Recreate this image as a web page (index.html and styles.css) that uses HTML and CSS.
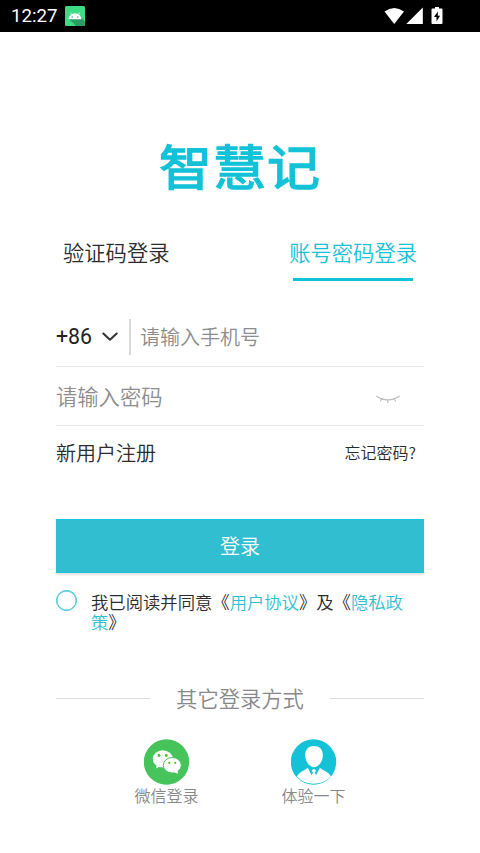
FILE: index.html
```html
<!DOCTYPE html>
<html lang="zh-CN">
<head>
<meta charset="utf-8">
<title>智慧记</title>
<link rel="stylesheet" href="styles.css">
</head>
<body>
<header class="status">
  <span class="clock">12:27</span>
  <svg class="droid" width="20" height="20" viewBox="0 0 20 20">
    <rect width="20" height="20" rx="1.5" fill="#3ddc84"/>
    <path d="M4 13 L11 20 H20 V16 L14.5 9z" fill="#2a9e62"/>
    <path d="M3.5 13.3a6.5 6 0 0 1 13 0z" fill="#fff"/>
    <path d="M6.8 9 5.4 6.7M13.2 9l1.4-2.3" stroke="#fff" stroke-width=".8"/>
    <circle cx="7.2" cy="11" r=".65" fill="#2c9c60"/><circle cx="12.8" cy="11" r=".65" fill="#2c9c60"/>
  </svg>
  <svg class="signals" width="60" height="20" viewBox="0 0 60 20" fill="#fff">
    <path d="M.5 5.6Q10.2-1.8 20 5.6L10.2 18z"/>
    <path d="M38.800 1.500V18H22.300z"/>
    <path d="M51 1h4v1.500h2.500q1 0 1 1V17q0 1-1 1h-9q-1 0-1-1V3.500q0-1 1-1H51z"/>
    <path d="M53.800 5.500 50 11h2.500v4.500l3.600-5.700h-2.300z" fill="#000"/>
  </svg>
</header>
<main class="login">
  <h1 class="logo">智慧记</h1>
  <nav class="tabs">
    <span class="tab">验证码登录</span>
    <span class="tab active">账号密码登录</span>
  </nav>
  <div class="field phone">
    <span class="code">+86</span>
    <svg class="chevron" width="16" height="10" viewBox="0 0 16 10" fill="none" stroke="#333" stroke-width="2" stroke-linecap="round" stroke-linejoin="round"><path d="M1.300 1.500 8 7.700l6.700-6.200"/></svg>
    <span class="bar"></span>
    <span class="hint">请输入手机号</span>
  </div>
  <div class="field password">
    <span class="hint">请输入密码</span>
    <svg class="eye" width="24" height="9" viewBox="0 0 24 9" fill="none" stroke="#bbb" stroke-width="1.100"><path d="M.3 1q5.500 3.900 11.500 3.900T23.700 1M5.600 3.700 4.400 6.400M11.800 5v3M18.300 3.700l1.400 2.700"/></svg>
  </div>
  <div class="links"><span class="register">新用户注册</span><span class="forgot">忘记密码?</span></div>
  <div class="submit">登录</div>
  <div class="agree">
    <span class="radio"></span>
    <p class="terms">我已阅读并同意《<span class="link">用户协议</span>》及《<span class="link">隐私政策</span>》</p>
  </div>
  <div class="other"><span class="rule"></span><span class="other-title">其它登录方式</span><span class="rule"></span></div>
  <div class="methods">
    <div class="method">
      <svg width="46" height="46" viewBox="0 0 46 46">
        <circle cx="22.500" cy="23" r="22.700" fill="#46c35b"/>
        <path d="M12.800 25.500 12 29.500l4.300-2.200z" fill="#fff"/>
        <ellipse cx="18.800" cy="19.800" rx="10" ry="8.600" fill="#fff"/>
        <ellipse cx="28.300" cy="26.300" rx="9" ry="7.800" fill="#fff" stroke="#46c35b" stroke-width="1"/>
        <path d="M30 33.300 34 34.800l-.5-3.500z" fill="#fff"/>
        <g fill="#46c31b"><circle cx="15" cy="16.500" r="1.400"/><circle cx="22.300" cy="16.500" r="1.400"/><circle cx="25.300" cy="23.800" r="1.100"/><circle cx="31.300" cy="23.800" r="1.100"/></g>
      </svg>
      <span>微信登录</span>
    </div>
    <div class="method">
      <svg width="46" height="46" viewBox="0 0 46 46">
        <circle cx="22.500" cy="23" r="22.700" fill="#13c2d7"/>
        <path d="M23 7c5.500 0 9 3.500 8.800 9.500C31.600 23 27.300 28.200 23 28.200S14.400 23 14.200 16.500C14 10.500 17.500 7 23 7z" fill="#fff"/>
        <path d="M16.800 28.800C13.500 31.800 8.500 32.500 6 37.500 10.500 42.500 16 44.700 22.500 44.700s12.800-2.200 17.500-7.400c-3-4.800-7.800-5.500-11.200-8.500l-3.800 7.500-2.100-2.300-2.300 2.300z" fill="#fff"/>
        <path d="m22.900 30 2.200 1.300-1.300 2.500 1.200 2.200h-4.200l1.200-2.200-1.300-2.500z" fill="#fff"/>
      </svg>
      <span>体验一下</span>
    </div>
  </div>
</main>
</body>
</html>
```
FILE: styles.css
```css
* { box-sizing: border-box; }
body {
  margin: 0;
  height: 853px;
  overflow: hidden;
  background: #fff;
  color: #2b2b2b;
  font-family: "Noto Sans CJK SC", sans-serif;
  font-weight: 350;
}
.status {
  display: flex;
  align-items: center;
  height: 32px;
  padding: 0 36px 0 11px;
  background: #000;
}
.clock { color: #fff; font: 400 18.7px/34px Roboto, sans-serif; width: 54px; }
.signals { margin-left: auto; }
.login { padding: 0 56px; }
.logo {
  margin: 105px 0 0;
  height: 60px;
  font-size: 53px;
  line-height: 60px;
  font-weight: 400;
  letter-spacing: 1px;
  color: #13c2d7;
  -webkit-text-stroke: 1.5px #13c2d7;
  text-align: center;
  transform: translateY(-3px) scaleY(.91);
}
.tabs { display: flex; justify-content: space-between; margin-top: 35px; padding: 0 7px; }
.tab { font-size: 21.3px; line-height: 40px; height: 50px; }
.active { display: flex; flex-direction: column; align-items: center; color: #13c2d7; }
.active::after { content: ""; width: 120px; height: 3px; margin-top: 6px; background: #13c2d7; }
.field { display: flex; align-items: center; border-bottom: 1px solid #e8e8e8; color: #8c8c8c; }
.phone { height: 60px; margin-top: 25px; }
.code { width: 46px; font: 400 21.3px/30px Roboto, sans-serif; color: #222; padding-top: 1px; }
.bar { width: 2px; height: 36px; margin: 0 9px 0 11px; background: #d8d8d8; }
.phone .hint { font-size: 20px; line-height: 30px; }
.password { height: 59px; justify-content: space-between; padding-right: 24px; }
.password .hint { font-size: 21.3px; line-height: 30px; }
.eye { margin-top: 7px; }
.links { display: flex; justify-content: space-between; align-items: center; height: 53px; padding-right: 8px; }
.register { font-size: 20px; }
.forgot { font-size: 16px; line-height: 24px; margin-top: -2px; }
.submit {
  height: 54px;
  margin-top: 40px;
  background: #31bed1;
  border: solid #1cc3df;
  border-width: 1px 0;
  box-shadow: 0 2px 2px rgba(0, 0, 0, .12);
  color: #fff;
  font-size: 20px;
  line-height: 52px;
  text-align: center;
}
.agree { display: flex; margin-top: 17px; }
.radio { flex: none; width: 21px; height: 21px; margin-right: 14px; border: 1.5px solid #31bed1; border-radius: 50%; box-shadow: inset 0 0 0 .4px #31bed1; }
.terms { margin: 2px 0 0; width: 330px; font-size: 17.33px; line-height: 20px; }
.link { color: #31bed1; }
.other { display: flex; align-items: center; justify-content: space-between; height: 40px; margin-top: 46px; }
.rule { width: 94px; height: 1px; background: #ddd; }
.other-title { font-size: 21.3px; line-height: 40px; color: #888; }
.methods { display: flex; justify-content: center; gap: 83px; margin-top: 21px; }
.method { display: flex; flex-direction: column; align-items: center; width: 64px; font-size: 16px; line-height: 21px; color: #888; }
```
